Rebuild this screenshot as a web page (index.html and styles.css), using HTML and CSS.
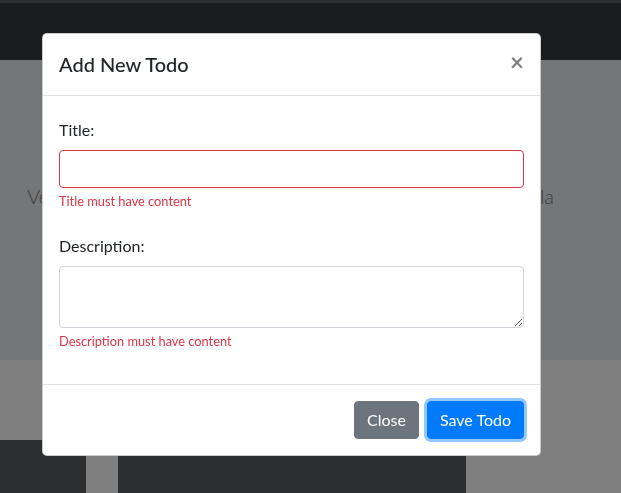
FILE: index.html
```html
<!DOCTYPE html>
<html lang="en">
<head>
<meta charset="utf-8">
<title>Add New Todo</title>
<link rel="stylesheet" href="styles.css">
</head>
<body>
<header class="navbar"></header>
<section class="jumbotron">
  <p class="lead">Vestibulum sed magna at nunc commodo placerat nulla</p>
</section>
<section class="strip"></section>
<section class="cards">
  <div class="card card-a"></div>
  <div class="card card-b"></div>
</section>

<div class="backdrop"></div>
<div class="modal">
  <div class="modal-content">
    <div class="modal-header">
      <h5 class="modal-title">Add New Todo</h5>
      <button type="button" class="close" aria-label="Close">&times;</button>
    </div>
    <div class="modal-body">
      <div class="form-group">
        <label class="label" for="title">Title:</label>
        <input id="title" class="form-control is-invalid" type="text">
        <div class="invalid-feedback">Title must have content</div>
      </div>
      <div class="form-group">
        <label class="label" for="desc">Description:</label>
        <textarea id="desc" class="form-control" rows="2"></textarea>
        <div class="invalid-feedback">Description must have content</div>
      </div>
    </div>
    <div class="modal-footer">
      <button type="button" class="btn btn-secondary">Close</button>
      <button type="button" class="btn btn-primary focus">Save Todo</button>
    </div>
  </div>
</div>
</body>
</html>
```

FILE: styles.css
```css
* { box-sizing: border-box; }

html, body {
  margin: 0;
  height: 100%;
  overflow: hidden;
}

body {
  font-family: Lato, "Noto Sans", "Liberation Sans", sans-serif;
  font-size: 16px;
  line-height: 1.5;
  color: #212529;
  background: #ffffff;
}

.navbar {
  height: 60px;
  background: #343a40;
  border-top: 3px solid #565e66;
}

.jumbotron {
  height: 300px;
  background: #e9ecef;
  padding-top: 121px;
}

.lead {
  margin: 0;
  padding: 0 67px 0 27px;
  font-size: 20px;
  line-height: 30px;
  font-weight: 300;
  color: #7a7a7a;
  text-align: justify;
  text-align-last: justify;
  white-space: nowrap;
  overflow: hidden;
}

.strip {
  height: 80px;
  background: #ffffff;
}

.cards {
  display: flex;
  gap: 32px;
  height: 60px;
}

.card { background: #5a5c60; }
.card-a { width: 86px; }
.card-b { width: 348px; }

.backdrop {
  position: fixed;
  inset: 0;
  background: rgba(0, 0, 0, 0.5);
}

.modal {
  position: fixed;
  inset: 0;
  padding: 33px 0 0 42px;
}

.modal-content {
  width: 499px;
  background: #ffffff;
  border: 1px solid rgba(0, 0, 0, 0.2);
  border-radius: 5px;
  display: flex;
  flex-direction: column;
}

.modal-header {
  display: flex;
  align-items: flex-start;
  justify-content: space-between;
  padding: 16px;
  border-bottom: 1px solid #dee2e6;
  height: 62px;
}

.modal-title {
  margin: 0;
  font-size: 20px;
  font-weight: 500;
  line-height: 29px;
  color: #212529;
}

.close {
  padding: 16px;
  margin: -16px -16px -16px auto;
  background: transparent;
  border: 0;
  font-family: inherit;
  font-size: 24px;
  font-weight: 700;
  line-height: 1;
  color: #000;
  text-shadow: 0 1px 0 #fff;
  opacity: 0.5;
  cursor: pointer;
}

.modal-body {
  padding: 16px;
}

.form-group {
  margin-bottom: 17px;
}

.label {
  display: block;
  padding-top: 6px;
  margin-bottom: 8px;
  line-height: 24px;
}

.form-control {
  display: block;
  width: 100%;
  height: 38px;
  padding: 6px 12px;
  font-family: inherit;
  font-size: 16px;
  line-height: 24px;
  color: #495057;
  background: #fff;
  border: 1px solid #ced4da;
  border-radius: 4px;
  margin: 0;
}

textarea.form-control {
  height: 62px;
  resize: vertical;
}

.form-control.is-invalid {
  border-color: #dc3545;
}

.invalid-feedback {
  margin-top: 4px;
  font-size: 12.8px;
  line-height: 19.2px;
  color: #dc3545;
}

.modal-footer {
  display: flex;
  align-items: center;
  justify-content: flex-end;
  padding: 12px;
  border-top: 1px solid #dee2e6;
}

.btn {
  margin: 4px;
  height: 38px;
  padding: 6px 12px;
  font-family: inherit;
  font-size: 16px;
  line-height: 24px;
  color: #fff;
  border: 1px solid transparent;
  border-radius: 4px;
  cursor: pointer;
}

.btn-secondary {
  background: #6c757d;
  border-color: #6c757d;
}

.btn-primary {
  background: #007bff;
  border-color: #007bff;
}

.btn-primary.focus {
  box-shadow: 0 0 0 3px rgba(38, 143, 255, 0.5);
}
```
